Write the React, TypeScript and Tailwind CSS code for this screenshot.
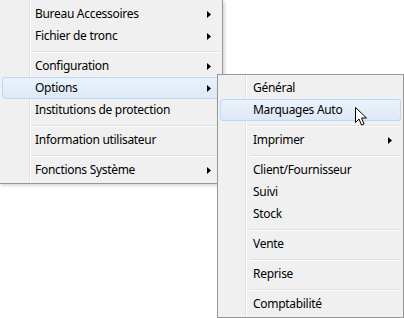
import React from "react";

type Item =
  | { type: "sep" }
  | { type: "item"; label: string; sub?: boolean; hot?: boolean };

const mainItems: Item[] = [
  { type: "item", label: "Bureau Accessoires", sub: true },
  { type: "item", label: "Fichier de tronc", sub: true },
  { type: "sep" },
  { type: "item", label: "Configuration", sub: true },
  { type: "item", label: "Options", sub: true, hot: true },
  { type: "item", label: "Institutions de protection" },
  { type: "sep" },
  { type: "item", label: "Information utilisateur" },
  { type: "sep" },
  { type: "item", label: "Fonctions Système", sub: true },
];

const subItems: Item[] = [
  { type: "item", label: "Général" },
  { type: "item", label: "Marquages Auto", hot: true },
  { type: "sep" },
  { type: "item", label: "Imprimer", sub: true },
  { type: "sep" },
  { type: "item", label: "Client/Fournisseur" },
  { type: "item", label: "Suivi" },
  { type: "item", label: "Stock" },
  { type: "sep" },
  { type: "item", label: "Vente" },
  { type: "sep" },
  { type: "item", label: "Reprise" },
  { type: "sep" },
  { type: "item", label: "Comptabilité" },
];

function Arrow() {
  return (
    <svg width="4" height="7" viewBox="0 0 4 7" className="block">
      <path d="M0 0 L4 3.5 L0 7 Z" fill="#000" />
    </svg>
  );
}

function Rows({ items }: { items: Item[] }) {
  return (
    <>
      {items.map((it, i) =>
        it.type === "sep" ? (
          <div key={i} className="h-[8px] pl-[30px] pr-[1px] pt-[4px]">
            <div className="h-[1px] bg-[#e0e0e0]" />
            <div className="h-[1px] bg-[#ffffff]" />
          </div>
        ) : (
          <div
            key={i}
            className={
              it.hot
                ? "h-[22px] flex items-center pl-[32px] pr-[8px] rounded-[3px] border border-[#bcd6f3] bg-gradient-to-b from-[#eaf3fc] to-[#dce9f6]"
                : "h-[22px] flex items-center pl-[33px] pr-[9px]"
            }
          >
            <span className="flex-1 whitespace-nowrap tracking-[-0.3px]">{it.label}</span>
            {it.sub && <Arrow />}
          </div>
        )
      )}
    </>
  );
}

export default function App() {
  return (
    <div
      className="relative w-[404px] h-[318px] overflow-hidden bg-white text-[12px] text-black"
      style={{ fontFamily: '"Noto Sans", "Open Sans", sans-serif' }}
    >
      <div className="ml-[-1px] w-[224px] border-r border-b border-l border-[#979797] bg-[#f0f0f0] bg-[linear-gradient(to_right,transparent_29px,#e2e3e3_29px,#e2e3e3_30px,#ffffff_30px,#ffffff_31px,transparent_31px)] pt-[3px] pb-[2px] px-[2px] shadow-[2px_2px_3px_rgba(0,0,0,0.15)]">
        <Rows items={mainItems} />
      </div>

      <div className="absolute left-[217px] top-[74px] w-[187px] border border-[#979797] bg-[#f0f0f0] bg-[linear-gradient(to_right,transparent_27px,#e2e3e3_27px,#e2e3e3_28px,#ffffff_28px,#ffffff_29px,transparent_29px)] p-[2px] shadow-[2px_2px_3px_rgba(0,0,0,0.15)]">
        <Rows items={subItems} />
        <svg
          width="13"
          height="20"
          viewBox="0 0 13 20"
          className="absolute left-[137px] top-[32px]"
        >
          <path
            d="M0.5 0.5 L0.5 15.5 L4 12 L6.5 18 L9 17 L6.5 11 L11.5 11 Z"
            fill="#fff"
            stroke="#000"
            strokeWidth="1"
            strokeLinejoin="miter"
          />
        </svg>
      </div>
    </div>
  );
}
